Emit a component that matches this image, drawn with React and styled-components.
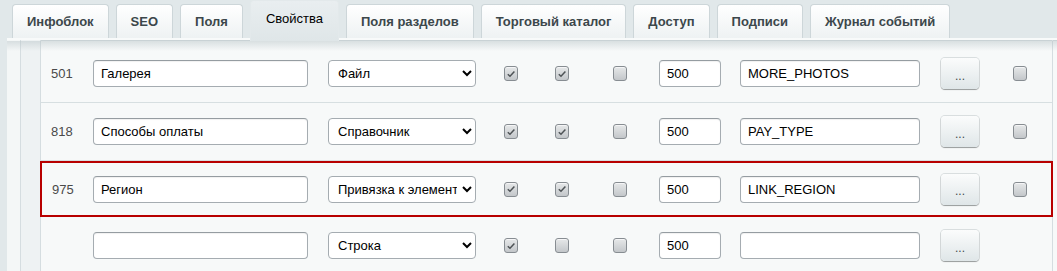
import React from "react"
import styled, { createGlobalStyle } from "styled-components"

const GlobalStyle = createGlobalStyle`
  html, body {
    margin: 0;
    padding: 0;
    background: #e1e8ea;
    font-family: "Liberation Sans", Arial, sans-serif;
  }
`

const Page = styled.div`
  width: 1057px;
  height: 271px;
  overflow: hidden;
  background: #e1e8ea;
`

const TabBar = styled.div`
  display: flex;
  align-items: flex-end;
  height: 38px;
  padding-left: 12px;
  position: relative;
  z-index: 2;
`

const Tab = styled.div`
  box-sizing: border-box;
  height: ${p => (p.$active ? "41px" : "34px")};
  margin-bottom: ${p => (p.$active ? "-3px" : "0")};
  margin-right: 7px;
  padding: ${p => (p.$active ? "0 15px 5px" : "0 14px")};
  display: flex;
  align-items: center;
  border: 1px solid #cdd6d9;
  border-bottom: none;
  border-radius: 4px 4px 0 0;
  background: ${p =>
    p.$active
      ? "linear-gradient(#e9eef0, #dfe6e8)"
      : "linear-gradient(#ffffff, #eef2f3)"};
  border-color: ${p => (p.$active ? "#e3e9eb" : "#cdd6d9")};
  font-size: 13px;
  font-weight: ${p => (p.$active ? "normal" : "bold")};
  color: ${p => (p.$active ? "#000" : "#3c474b")};
  white-space: nowrap;
`

const Panel = styled.div`
  margin-left: 7px;
  display: flex;
  background: #f7f9f9;
  border-top: 2px solid #f8fafa;
  box-shadow: inset 0 1px 0 #c9d2d5;
  position: relative;
  height: 240px;
  &::before {
    content: "";
    position: absolute;
    left: 0;
    right: 0;
    top: 1px;
    height: 10px;
    background: linear-gradient(rgba(180, 192, 196, 0.45), rgba(180, 192, 196, 0));
    pointer-events: none;
  }
`

const Gutter = styled.div`
  width: 13px;
  background: #f4f7f7;
`

const Rail = styled.div`
  width: 19px;
  background: #eef2f3;
  border-left: 1px solid #d5dde0;
  border-right: 1px solid #d5dde0;
`

const Table = styled.div`
  width: 1011px;
  border-right: 1px solid #d5dde0;
  padding-top: 5px;
`

const Row = styled.div`
  box-sizing: border-box;
  display: flex;
  align-items: center;
  height: ${p => (p.$selected ? "56px" : "58px")};
  border-bottom: 1px solid #d7dfe1;
  ${p =>
    p.$selected &&
    `
    border: 2px solid #b80000;
    margin-left: -1px;
    margin-right: -1px;
    padding-left: 0;
    & > div:first-child { width: 51px; }
  `}
`

const Cell = styled.div`
  box-sizing: border-box;
  width: ${p => p.$w}px;
  display: flex;
  align-items: center;
  justify-content: ${p => (p.$center ? "center" : "flex-start")};
  padding-left: ${p => p.$pl || 0}px;
`

const Id = styled.span`
  font-size: 13px;
  color: #4a4a4a;
`

const TextInput = styled.input`
  box-sizing: border-box;
  width: ${p => p.$w}px;
  height: 27px;
  border: 1px solid #a5acb1;
  border-top-color: #959ca1;
  border-radius: 4px;
  background: #fff;
  padding: 0 7px;
  font-family: "Liberation Sans", Arial, sans-serif;
  font-size: 13px;
  color: #000;
  outline: none;
  box-shadow: inset 0 1px 1px rgba(0, 0, 0, 0.06);
`

const Select = styled.select`
  box-sizing: border-box;
  width: 148px;
  height: 27px;
  border: 1px solid #a5acb1;
  border-radius: 4px;
  background: #fff;
  padding: 0 2px 0 5px;
  font-family: "Liberation Sans", Arial, sans-serif;
  font-size: 13px;
  color: #000;
  outline: none;
`

const Box = styled.span`
  box-sizing: border-box;
  width: 14px;
  height: 15px;
  border: 1px solid #878d92;
  border-radius: 3px;
  background: linear-gradient(#e6e8e9, #c3c7ca);
  box-shadow: inset 0 1px 0 rgba(255, 255, 255, 0.6);
  display: flex;
  align-items: center;
  justify-content: center;
`

const DotsButton = styled.button`
  box-sizing: border-box;
  width: 38px;
  height: 31px;
  border: none;
  border-radius: 4px;
  background: linear-gradient(#fbfcfc, #dfe6e8);
  box-shadow: 0 1px 1px rgba(0, 0, 0, 0.3), 0 0 0 1px rgba(160, 172, 176, 0.35);
  font-family: "Liberation Sans", Arial, sans-serif;
  font-size: 12px;
  color: #444a4d;
  padding: 4px 0 0;
`

const Check = ({ checked }) => (
  <Box>
    {checked && (
      <svg width="10" height="10" viewBox="0 0 10 10">
        <path d="M1.8 5.2 L4 7.3 L8.4 2.6" fill="none" stroke="#4e5356" strokeWidth="1.5" />
      </svg>
    )}
  </Box>
)

const tabs = [
  "Инфоблок",
  "SEO",
  "Поля",
  "Свойства",
  "Поля разделов",
  "Торговый каталог",
  "Доступ",
  "Подписи",
  "Журнал событий",
]

const rows = [
  { id: "501", name: "Галерея", type: "Файл", c: [true, true, false], sort: "500", code: "MORE_PHOTOS", del: true },
  { id: "818", name: "Способы оплаты", type: "Справочник", c: [true, true, false], sort: "500", code: "PAY_TYPE", del: true },
  { id: "975", name: "Регион", type: "Привязка к элементам", c: [true, true, false], sort: "500", code: "LINK_REGION", del: true, selected: true },
  { id: "", name: "", type: "Строка", c: [true, false, false], sort: "500", code: "", del: false },
]

const App = () => {
  return (
    <Page>
      <GlobalStyle />
      <TabBar>
        {tabs.map(t => (
          <Tab key={t} $active={t === "Свойства"}>{t}</Tab>
        ))}
      </TabBar>
      <Panel>
        <Gutter />
        <Rail />
        <Table>
          {rows.map((r, i) => (
            <Row key={i} $selected={r.selected}>
              <Cell $w={52} $pl={10}><Id>{r.id}</Id></Cell>
              <Cell $w={235}><TextInput $w={215} defaultValue={r.name} /></Cell>
              <Cell $w={158}>
                <Select defaultValue={r.type}>
                  <option>{r.type}</option>
                </Select>
              </Cell>
              <Cell $w={50} $center><Check checked={r.c[0]} /></Cell>
              <Cell $w={52} $center><Check checked={r.c[1]} /></Cell>
              <Cell $w={64} $center><Check checked={r.c[2]} /></Cell>
              <Cell $w={81} $pl={7}><TextInput $w={62} defaultValue={r.sort} /></Cell>
              <Cell $w={203} $pl={7}><TextInput $w={180} defaultValue={r.code} /></Cell>
              <Cell $w={54} $pl={5}><DotsButton>...</DotsButton></Cell>
              <Cell $w={60} $center>{r.del && <Check />}</Cell>
            </Row>
          ))}
        </Table>
      </Panel>
    </Page>
  )
}

export default App
